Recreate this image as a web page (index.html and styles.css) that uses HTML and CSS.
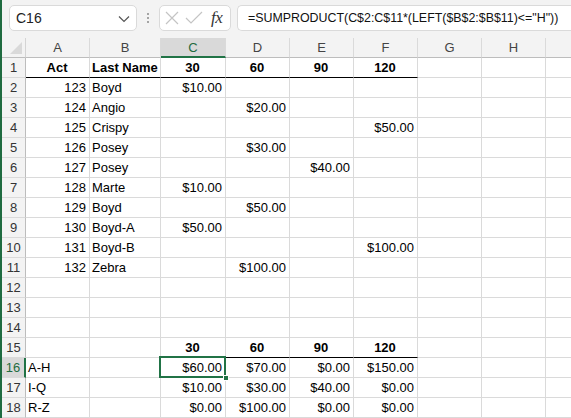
FILE: index.html
```html
<!DOCTYPE html>
<html>
<head>
<meta charset="utf-8">
<link rel="stylesheet" href="styles.css">
</head>
<body>
<div class="app">
  <div class="toolbar">
    <div class="namebox">
      <span class="name">C16</span>
      <svg class="chev" width="12" height="8" viewBox="0 0 12 8"><path d="M1 1.5 L6 6.5 L11 1.5" fill="none" stroke="#555" stroke-width="1.2"/></svg>
    </div>
    <div class="dots"><i></i><i></i><i></i></div>
    <div class="fxbox">
      <svg width="16" height="16" viewBox="0 0 16 16"><path d="M2 2 L14 14 M14 2 L2 14" stroke="#c4c4c4" stroke-width="1.2" fill="none"/></svg>
      <svg width="18" height="16" viewBox="0 0 18 16"><path d="M1 8 L6 13 L17 2" stroke="#c4c4c4" stroke-width="1.2" fill="none"/></svg>
      <span class="fx">fx</span>
    </div>
    <div class="formula">=SUMPRODUCT(C$2:C$11*(LEFT($B$2:$B$11)&lt;="H"))</div>
  </div>
  <div class="grid">
    <div class="corner"><span class="tri"></span></div>
    <div class="ch">A</div><div class="ch">B</div><div class="ch sel">C</div><div class="ch">D</div><div class="ch">E</div><div class="ch">F</div><div class="ch">G</div><div class="ch">H</div><div class="ch last"></div>

    <div class="rh">1</div><div class="c b ctr bb">Act</div><div class="c b ctr bb">Last Name</div><div class="c b ctr bb">30</div><div class="c b ctr bb">60</div><div class="c b ctr bb">90</div><div class="c b ctr bb">120</div><div class="c"></div><div class="c"></div><div class="c last"></div>

    <div class="rh">2</div><div class="c r">123</div><div class="c">Boyd</div><div class="c r">$10.00</div><div class="c"></div><div class="c"></div><div class="c"></div><div class="c"></div><div class="c"></div><div class="c last"></div>
    <div class="rh">3</div><div class="c r">124</div><div class="c">Angio</div><div class="c"></div><div class="c r">$20.00</div><div class="c"></div><div class="c"></div><div class="c"></div><div class="c"></div><div class="c last"></div>
    <div class="rh">4</div><div class="c r">125</div><div class="c">Crispy</div><div class="c"></div><div class="c"></div><div class="c"></div><div class="c r">$50.00</div><div class="c"></div><div class="c"></div><div class="c last"></div>
    <div class="rh">5</div><div class="c r">126</div><div class="c">Posey</div><div class="c"></div><div class="c r">$30.00</div><div class="c"></div><div class="c"></div><div class="c"></div><div class="c"></div><div class="c last"></div>
    <div class="rh">6</div><div class="c r">127</div><div class="c">Posey</div><div class="c"></div><div class="c"></div><div class="c r">$40.00</div><div class="c"></div><div class="c"></div><div class="c"></div><div class="c last"></div>
    <div class="rh">7</div><div class="c r">128</div><div class="c">Marte</div><div class="c r">$10.00</div><div class="c"></div><div class="c"></div><div class="c"></div><div class="c"></div><div class="c"></div><div class="c last"></div>
    <div class="rh">8</div><div class="c r">129</div><div class="c">Boyd</div><div class="c"></div><div class="c r">$50.00</div><div class="c"></div><div class="c"></div><div class="c"></div><div class="c"></div><div class="c last"></div>
    <div class="rh">9</div><div class="c r">130</div><div class="c">Boyd-A</div><div class="c r">$50.00</div><div class="c"></div><div class="c"></div><div class="c"></div><div class="c"></div><div class="c"></div><div class="c last"></div>
    <div class="rh">10</div><div class="c r">131</div><div class="c">Boyd-B</div><div class="c"></div><div class="c"></div><div class="c"></div><div class="c r">$100.00</div><div class="c"></div><div class="c"></div><div class="c last"></div>
    <div class="rh">11</div><div class="c r">132</div><div class="c">Zebra</div><div class="c"></div><div class="c r">$100.00</div><div class="c"></div><div class="c"></div><div class="c"></div><div class="c"></div><div class="c last"></div>
    <div class="rh">12</div><div class="c"></div><div class="c"></div><div class="c"></div><div class="c"></div><div class="c"></div><div class="c"></div><div class="c"></div><div class="c"></div><div class="c last"></div>
    <div class="rh">13</div><div class="c"></div><div class="c"></div><div class="c"></div><div class="c"></div><div class="c"></div><div class="c"></div><div class="c"></div><div class="c"></div><div class="c last"></div>
    <div class="rh">14</div><div class="c"></div><div class="c"></div><div class="c"></div><div class="c"></div><div class="c"></div><div class="c"></div><div class="c"></div><div class="c"></div><div class="c last"></div>
    <div class="rh">15</div><div class="c"></div><div class="c"></div><div class="c b ctr bb">30</div><div class="c b ctr bb">60</div><div class="c b ctr bb">90</div><div class="c b ctr bb">120</div><div class="c"></div><div class="c"></div><div class="c last"></div>
    <div class="rh sel">16</div><div class="c">A-H</div><div class="c"></div><div class="c r active">$60.00<span class="selbox"></span><span class="handle"></span></div><div class="c r">$70.00</div><div class="c r">$0.00</div><div class="c r">$150.00</div><div class="c"></div><div class="c"></div><div class="c last"></div>
    <div class="rh">17</div><div class="c">I-Q</div><div class="c"></div><div class="c r">$10.00</div><div class="c r">$30.00</div><div class="c r">$40.00</div><div class="c r">$0.00</div><div class="c"></div><div class="c"></div><div class="c last"></div>
    <div class="rh">18</div><div class="c">R-Z</div><div class="c"></div><div class="c r">$0.00</div><div class="c r">$100.00</div><div class="c r">$0.00</div><div class="c r">$0.00</div><div class="c"></div><div class="c"></div><div class="c last"></div>
  </div>
</div>
</body>
</html>
```
FILE: styles.css
```css
* { box-sizing: border-box; }
html, body { margin: 0; padding: 0; background: #fff; }
body { width: 571px; height: 418px; overflow: hidden; font-family: "Liberation Sans", Arial, sans-serif; }
.app { border-left: 2px solid #1f6b40; height: 418px; }
.toolbar {
  height: 38px; background: #f3f3f3;
  display: flex; align-items: flex-start; padding-top: 5px; padding-left: 7px;
}
.namebox {
  width: 128px; height: 26px; background: #fff; border: 1px solid #dadada; border-radius: 5px;
  display: flex; align-items: center; justify-content: space-between; padding: 0 6px 0 6px;
}
.name { font-size: 14px; color: #222; }
.chev { margin-top: 1px; }
.dots { width: 22px; height: 26px; display: flex; flex-direction: column; align-items: center; justify-content: center; gap: 2px; }
.dots i { display: block; width: 2px; height: 2px; background: #8a8a8a; border-radius: 1px; }
.fxbox {
  width: 72px; height: 26px; background: #fff; border: 1px solid #dadada; border-radius: 5px;
  display: flex; align-items: center; padding-left: 4px; gap: 5px;
}
.fx { font-family: "Liberation Serif", serif; font-style: italic; font-size: 17px; color: #333; margin-left: 3px; letter-spacing: -0.5px; }
.formula {
  margin-left: 6px; flex: 1; height: 26px; background: #fff; border: 1px solid #dadada; border-right: none;
  border-radius: 5px 0 0 5px; font-size: 12.4px; color: #111; line-height: 24px; padding-left: 10px; white-space: nowrap; overflow: hidden;
}
.grid {
  display: grid;
  grid-template-columns: 24px 64px 71px 65px 64px 64px 64px 64px 64px 1fr;
  grid-auto-rows: 20px;
}
.corner { background: #f3f3f3; border-right: 1px solid #d4d4d4; border-bottom: 1px solid #bdbdbd; position: relative; }
.tri { position: absolute; right: 3px; bottom: 3px; width: 12px; height: 12px; background: #d9d9d9; clip-path: polygon(100% 0, 100% 100%, 0 100%); }
.ch {
  background: #f3f3f3; border-right: 1px solid #dadada; border-bottom: 1px solid #bdbdbd;
  font-size: 13px; color: #444; text-align: center; line-height: 19px;
}
.ch.sel { background: #d9d9d9; color: #1f6b40; border-bottom: 2px solid #217346; }
.ch.last { border-right: none; }
.rh {
  background: #f3f3f3; border-right: 1px solid #bdbdbd; border-bottom: 1px solid #dadada;
  font-size: 13px; color: #333; text-align: center; line-height: 19px;
}
.rh.sel { background: #d9d9d9; color: #1f6b40; border-right: 2px solid #217346; }
.c {
  border-right: 1px solid #dadada; border-bottom: 1px solid #dadada;
  font-size: 13px; color: #000; line-height: 19px; padding: 0 3px 0 2px; white-space: nowrap; overflow: visible;
}
.c.last { border-right: none; }
.c.r { text-align: right; }
.c.ctr { text-align: center; }
.c.b { font-weight: bold; }
.c.bb { border-bottom: 1px solid #000; }
.active { position: relative; }
.selbox { position: absolute; left: -2px; top: -2px; right: -1px; bottom: -1px; border: 2px solid #217346; }
.handle { position: absolute; right: -4px; bottom: -4px; width: 6px; height: 6px; background: #217346; border: 1px solid #fff; }
```
